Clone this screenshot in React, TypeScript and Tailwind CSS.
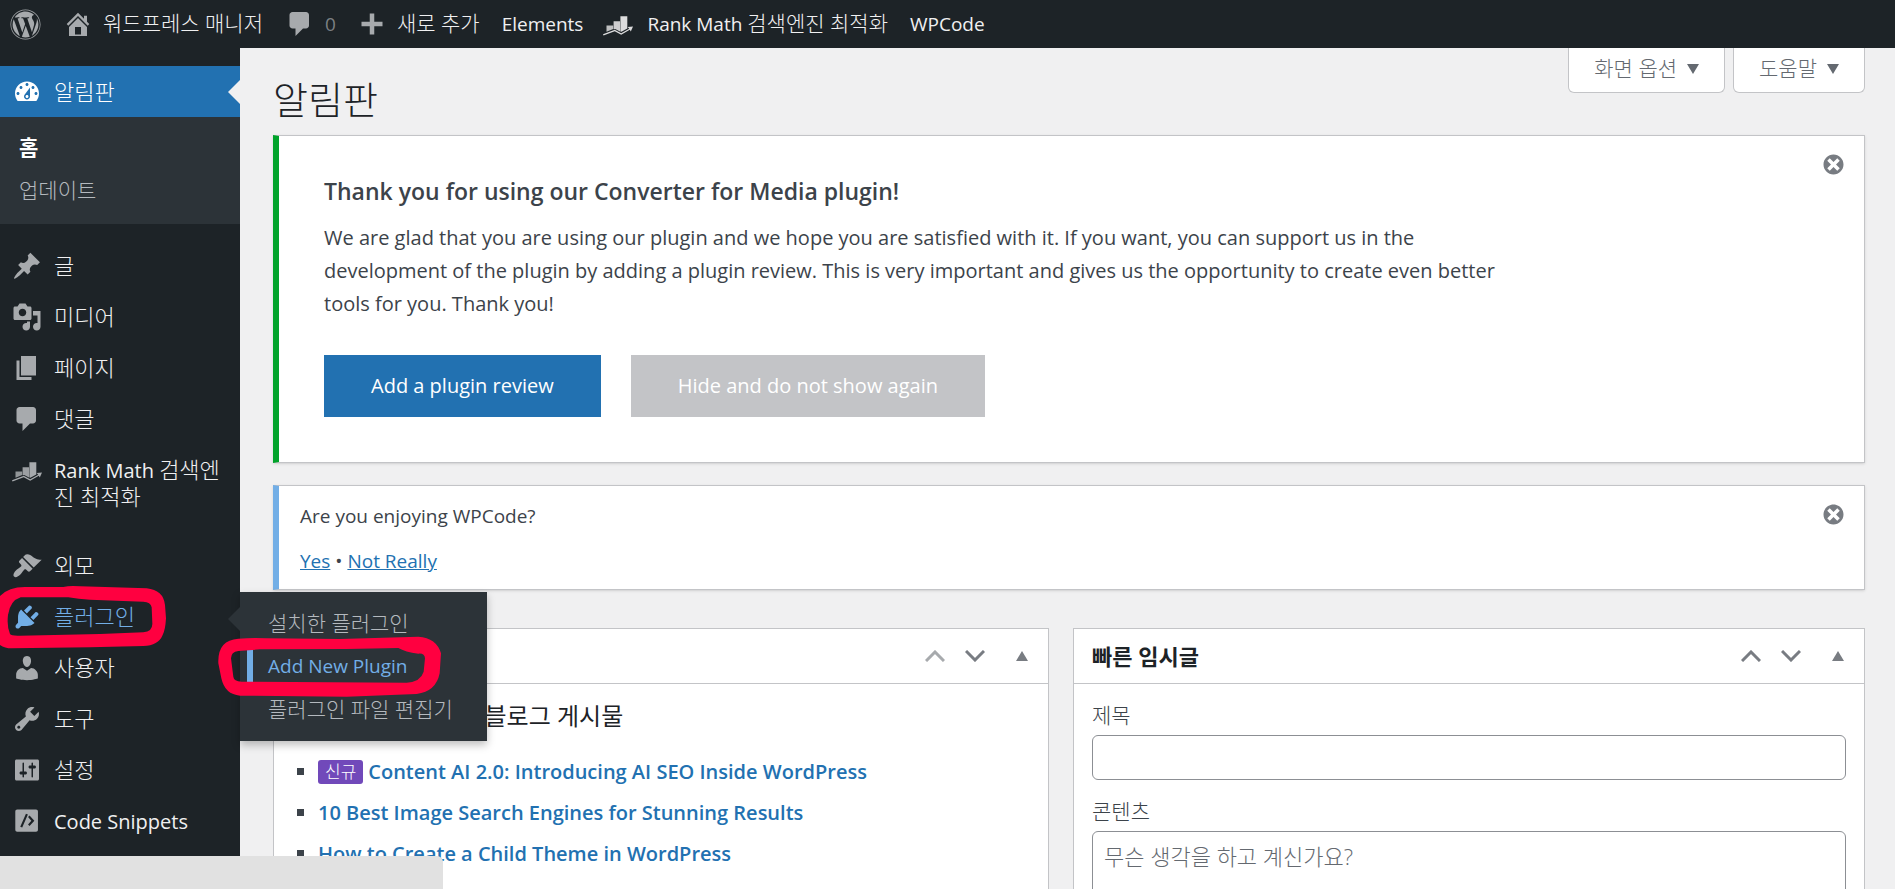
import type { ReactNode } from "react";
import { FaWordpress } from "react-icons/fa";

const icons = {
  dashboard:
    "M3.76 16h12.48c1.1-1.37 1.76-3.11 1.76-5 0-4.42-3.58-8-8-8s-8 3.58-8 8c0 1.89.66 3.63 1.76 5zM10 4c.55 0 1 .45 1 1s-.45 1-1 1-1-.45-1-1 .45-1 1-1zM6 6c.55 0 1 .45 1 1s-.45 1-1 1-1-.45-1-1 .45-1 1-1zm8 0c.55 0 1 .45 1 1s-.45 1-1 1-1-.45-1-1 .45-1 1-1zm-5.37 5.55L12 7v6c0 1.1-.9 2-2 2s-2-.9-2-2c0-.57.24-1.08.63-1.45zM4 10c.55 0 1 .45 1 1s-.45 1-1 1-1-.45-1-1 .45-1 1-1zm12 0c.55 0 1 .45 1 1s-.45 1-1 1-1-.45-1-1 .45-1 1-1zm-5 3c0-.55-.45-1-1-1s-1 .45-1 1 .45 1 1 1 1-.45 1-1z",
  post: "M10.44 3.02l1.82-1.82 6.36 6.35-1.83 1.82c-1.05-.68-2.48-.57-3.41.36l-.75.75c-.92.93-1.04 2.35-.35 3.41l-1.83 1.82-2.41-2.41-2.8 2.79c-.42.42-3.38 2.71-3.8 2.29s1.86-3.39 2.28-3.81l2.79-2.79L4.1 9.36l1.83-1.82c1.05.69 2.48.57 3.4-.36l.75-.75c.93-.92 1.05-2.35.36-3.41z",
  media:
    "M13 11V4c0-.55-.45-1-1-1h-1.67L9 1H5L3.67 3H2c-.55 0-1 .45-1 1v7c0 .55.45 1 1 1h10c.55 0 1-.45 1-1zM7 4.5c1.38 0 2.5 1.12 2.5 2.5S8.38 9.5 7 9.5 4.5 8.38 4.5 7 5.62 4.5 7 4.5zM14 6h5v10.5c0 1.38-1.12 2.5-2.5 2.5S14 17.88 14 16.5s1.12-2.5 2.5-2.5c.17 0 .34.02.5.05V9h-3V6zm-4 8.05V13h2v3.5c0 1.38-1.12 2.5-2.5 2.5S7 17.88 7 16.5 8.12 14 9.5 14c.17 0 .34.02.5.05z",
  page: "M6 15V2h10v13H6zm-1 1h8v2H3V5h2v11z",
  comments:
    "M5 2h9c1.1 0 2 .9 2 2v7c0 1.1-.9 2-2 2h-2l-5 5v-5H5c-1.1 0-2-.9-2-2V4c0-1.1.9-2 2-2z",
  appearance:
    "M14.48 11.06L7.41 3.99l1.5-1.5c.5-.56 2.3-.47 3.51.32 1.21.8 1.43 1.28 2.91 2.1 1.18.64 2.45 1.26 4.45.85zm-.71.71L6.7 4.7 4.93 6.47c-.39.39-.39 1.02 0 1.41l1.06 1.06c.39.39.39 1.03 0 1.42-.6.6-1.43 1.11-2.21 1.69-.35.26-.7.53-1.01.84C1.43 14.23.4 16.08 1.4 17.07c.99 1 2.84-.03 4.18-1.36.31-.31.58-.66.85-1.02.57-.78 1.08-1.61 1.69-2.21.39-.39 1.02-.39 1.41 0l1.06 1.06c.39.39 1.02.39 1.41 0z",
  plugins:
    "M13.11 4.36L9.87 7.6 8 5.73l3.24-3.24c.35-.34 1.05-.2 1.56.32.52.51.66 1.21.31 1.55zm-8 1.77l.91-1.12 9.01 9.01-1.19.84c-.71.71-2.63 1.16-3.82 1.16H6.14L4.9 17.26c-.59.59-1.54.59-2.12 0-.59-.58-.59-1.53 0-2.12l1.24-1.24v-3.88c0-1.13.4-3.19 1.09-3.89zm7.26 3.97l3.24-3.24c.34-.35 1.04-.21 1.55.31.52.51.66 1.21.31 1.55l-3.24 3.25z",
  users:
    "M10 9.25c-2.27 0-2.73-3.44-2.73-3.44C7 4.02 7.82 2 9.97 2c2.16 0 2.98 2.02 2.71 3.81 0 0-.41 3.44-2.68 3.44zm0 2.57L12.72 10c2.39 0 4.52 2.33 4.52 4.53v2.49s-3.65 1.13-7.24 1.13c-3.65 0-7.24-1.13-7.24-1.13v-2.49c0-2.25 1.94-4.48 4.47-4.48z",
  tools:
    "M16.68 9.77c-1.34 1.34-3.3 1.67-4.95.99l-5.41 6.52c-.99.99-2.59.99-3.58 0s-.99-2.59 0-3.57l6.52-5.42c-.68-1.65-.35-3.61.99-4.95 1.28-1.28 3.12-1.62 4.72-1.06l-2.89 2.89 2.82 2.82 2.86-2.87c.53 1.58.18 3.39-1.08 4.65zM3.81 16.21c.4.39 1.04.39 1.43 0 .4-.4.4-1.04 0-1.43-.39-.4-1.03-.4-1.43 0-.39.39-.39 1.03 0 1.43z",
  settings:
    "M18 16V4c0-.55-.45-1-1-1H3c-.55 0-1 .45-1 1v12c0 .55.45 1 1 1h14c.55 0 1-.45 1-1zM8 11h1c.55 0 1 .45 1 1s-.45 1-1 1H8v1.5c0 .28-.22.5-.5.5s-.5-.22-.5-.5V13H6c-.55 0-1-.45-1-1s.45-1 1-1h1V5.5c0-.28.22-.5.5-.5s.5.22.5.5V11zm5-2h-1c-.55 0-1-.45-1-1s.45-1 1-1h1V5.5c0-.28.22-.5.5-.5s.5.22.5.5V7h1c.55 0 1 .45 1 1s-.45 1-1 1h-1v5.5c0 .28-.22.5-.5.5s-.5-.22-.5-.5V9z",
  home: "M16 8.5l1.53 1.53-1.06 1.06L10 4.6l-6.47 6.49-1.06-1.06L10 2.5l4 4v-2h2v4zm-6-2.46l6 5.99V18H4v-5.97zM12 17v-5H8v5h4z",
  plus: "M17 8.5v3h-5.5V17h-3v-5.5H3v-3h5.5V3h3v5.5z",
  dismiss:
    "M10 2c4.42 0 8 3.58 8 8s-3.58 8-8 8-8-3.58-8-8 3.58-8 8-8zm5 11l-3-3 3-3-2-2-3 3-3-3-2 2 3 3-3 3 2 2 3-3 3 3z",
  code: "M3.500 2.300h12.500c.8 0 1.300.5 1.300 1.300v12.200c0 .8-.5 1.300-1.300 1.300H3.500c-.8 0-1.300-.5-1.300-1.300V3.600c0-.8.5-1.300 1.300-1.300zM9.300 5.200L5.500 13.900l1.300.5L10.600 5.700zM10.700 7.300l2.200 2.500-2.200 2.600 1 1L14.900 9.800 11.700 6.300z",
};

type IconName = keyof typeof icons | "rankMath";

function Icon({ name, className = "size-[30px]" }: { name: IconName; className?: string }) {
  if (name === "rankMath") {
    return (
      <svg viewBox="0 0 30 30" fill="currentColor" aria-hidden="true" className={`shrink-0 ${className}`}>
        <path opacity="0.85" d="M3.500 16.500h6.700v3.500l-6.700 2.800z" />
        <path opacity="0.92" d="M10.600 12.300h6.400v10.200l-4.800-2.600-1.600.4z" />
        <path d="M17.400 7.300h6.900v12.100l-5.900 3.300-1-.2z" />
        <path d="M0 25.200l11.800-4.500 6.400 3.600 8-4.500-1.600-1.800 5.400-.6-2.200 5-1-1.700-8.600 5-6.500-3.500L.5 26.500z" />
      </svg>
    );
  }
  return (
    <svg viewBox="0 0 20 20" fill="currentColor" fillRule="evenodd" aria-hidden="true" className={`shrink-0 ${className}`}>
      <path d={icons[name]} />
    </svg>
  );
}

const mainMenu: { icon: IconName; latin?: string; label?: string }[][] = [
  [
    { icon: "post", label: "글" },
    { icon: "media", label: "미디어" },
    { icon: "page", label: "페이지" },
    { icon: "comments", label: "댓글" },
    { icon: "rankMath", latin: "Rank Math ", label: "검색엔진 최적화" },
  ],
  [
    { icon: "appearance", label: "외모" },
    { icon: "plugins", label: "플러그인" },
    { icon: "users", label: "사용자" },
    { icon: "tools", label: "도구" },
    { icon: "settings", label: "설정" },
    { icon: "code", latin: "Code Snippets" },
  ],
];

function AdminBar() {
  return (
    <header className="flex h-12 items-center bg-[#1d2327] text-[19px] text-[#f0f0f1]">
      <a href="#wp" aria-label="WordPress" className="ml-[10px] text-[#a7aaad]">
        <FaWordpress className="size-[31px]" />
      </a>
      <a href="#site" className="ml-[22px] flex items-center gap-[10px] text-[21px] font-light">
        <Icon name="home" className="size-[30px] text-[#a7aaad]" />
        워드프레스 매니저
      </a>
      <a href="#comments" className="ml-[22px] flex items-center gap-[10px] text-[#a7aaad]/70">
        <Icon name="comments" className="size-[30px] text-[#a7aaad]" />0
      </a>
      <a href="#new" className="ml-[21px] flex items-center gap-[10px] text-[21px] font-light">
        <Icon name="plus" className="size-[30px] text-[#a7aaad]" />
        새로 추가
      </a>
      <a href="#elements" className="ml-[22px]">Elements</a>
      <a href="#rank" className="ml-5 flex items-center gap-[14px]">
        <Icon name="rankMath" className="size-[30px] text-[#dcdcdd]" />
        <span>
          Rank Math <span className="text-[21px] font-light">검색엔진 최적화</span>
        </span>
      </a>
      <a href="#wpcode" className="ml-[22px]">WPCode</a>
    </header>
  );
}

function PluginsFlyout() {
  return (
    <ul className="absolute left-full top-0 z-20 w-[247px] bg-[#2c3338] py-[10px] text-[21px] font-light leading-[27px] text-[#b4b9be] shadow-[0_4px_8px_rgba(0,0,0,0.25)]">
      <li className="absolute right-full top-[15px] h-0 w-0 border-y-[12px] border-r-[12px] border-y-transparent border-r-[#2c3338]" />
      <li className="flex h-[43px] items-center pl-7">
        <a href="#installed">설치한 플러그인</a>
      </li>
      <li className="flex h-[43px] items-center pl-[7px] text-[19px] font-normal">
        <a href="#add" className="border-l-[6px] border-[#72aee6] py-[3px] pl-[15px] text-[#72aee6]">Add New Plugin</a>
      </li>
      <li className="flex h-[43px] items-center pl-7">
        <a href="#editor">플러그인 파일 편집기</a>
      </li>
    </ul>
  );
}

function Sidebar() {
  return (
    <nav className="relative z-10 w-60 shrink-0 self-start bg-[#1d2327] pb-[10px] pt-[18px] text-xl leading-[27px] text-[#f0f0f1]">
      <a href="#dashboard" className="relative flex h-[51px] items-center bg-[#2271b1] text-[22px] font-light text-white">
        <span className="flex w-[54px] justify-center">
          <Icon name="dashboard" />
        </span>
        알림판
        <span className="absolute right-0 h-0 w-0 border-y-[12px] border-r-[12px] border-y-transparent border-r-[#f0f0f1]" />
      </a>
      <ul className="mb-[17px] bg-[#2c3338] pb-[12px] pt-[9px] pl-[19px] text-[21px] text-[#b4b9be]">
        <li className="flex h-[43px] items-center font-bold text-white">
          <a href="#home">홈</a>
        </li>
        <li className="flex h-[43px] items-center font-light">
          <a href="#updates">업데이트</a>
        </li>
      </ul>
      {mainMenu.map((group, index) => (
        <ul key={index} className="mb-[18px] last:mb-0">
          {group.map(({ icon, latin, label }) => {
            const open = icon === "plugins";
            return (
              <li key={icon} className="relative">
                <a href={`#${icon}`} className={`flex items-start ${open ? "text-[#72aee6]" : ""}`}>
                  <span className={`flex w-[54px] shrink-0 justify-center pt-[10px] ${open ? "" : "text-[#a7aaad]"}`}>
                    <Icon name={icon} />
                  </span>
                  <span className="break-all py-3 pr-2">
                    {latin}
                    {label && <span className="text-[22px] font-light leading-none">{label}</span>}
                  </span>
                </a>
                {open && <PluginsFlyout />}
              </li>
            );
          })}
        </ul>
      ))}
    </nav>
  );
}

function MetaTab({ children }: { children: ReactNode }) {
  return (
    <button className="flex h-[45px] items-center gap-[10px] rounded-b-md border border-t-0 border-[#c3c4c7] bg-white px-[25px] pb-[2px] text-[21px] font-light text-[#646970]">
      {children}
      <svg viewBox="0 0 12 10" className="h-[10px] w-3" fill="currentColor" aria-hidden="true">
        <path d="M0 0h12L6 10z" />
      </svg>
    </button>
  );
}

function DismissButton() {
  return (
    <button aria-label="닫기" className="absolute right-[18px] top-4 text-[#787c82]">
      <Icon name="dismiss" className="size-[25px]" />
    </button>
  );
}

function PostboxHeader({ title, first }: { title: string; first?: boolean }) {
  return (
    <div className="flex h-[55px] items-center border-b border-[#c3c4c7] pl-[18px] pr-5 text-[#787c82]">
      <h2 className="flex-1 text-[22px] font-bold text-[#1d2327]">{title}</h2>
      <button aria-label="위로 이동" className={first ? "text-[#a7aaad]" : ""}>
        <svg viewBox="0 0 20 12" className="h-3 w-5" fill="none" stroke="currentColor" strokeWidth="3" aria-hidden="true">
          <path d="M1 11L10 2l9 9" />
        </svg>
      </button>
      <button aria-label="아래로 이동" className="ml-5">
        <svg viewBox="0 0 20 12" className="h-3 w-5" fill="none" stroke="currentColor" strokeWidth="3" aria-hidden="true">
          <path d="M1 1l9 9 9-9" />
        </svg>
      </button>
      <button aria-label="패널 전환" className="ml-[31px]">
        <svg viewBox="0 0 12 10" className="h-[10px] w-3" fill="currentColor" aria-hidden="true">
          <path d="M6 0l6 10H0z" />
        </svg>
      </button>
    </div>
  );
}

const posts = [
  { title: "Content AI 2.0: Introducing AI SEO Inside WordPress", isNew: true },
  { title: "10 Best Image Search Engines for Stunning Results" },
  { title: "How to Create a Child Theme in WordPress" },
];

function HighlightMarks() {
  return (
    <svg
      viewBox="0 0 1500 360"
      className="pointer-events-none absolute left-0 top-[530px] z-40 h-[120px] w-[500px] overflow-visible"
      fill="#ff0040"
      fillRule="evenodd"
      aria-hidden="true"
    >
      <path d="M-6 205Q20 171 75 171L190 171Q210 166 240 169L440 175Q490 180 495 225L498 265Q496 300 488 315Q475 347 430 348L270 352L35 355Q10 355-6 340zM62 202Q30 212 24 255Q20 290 30 312Q34 318 60 317L300 312L430 307Q458 304 457 280L455 232Q452 216 430 215L270 209Q235 207 205 202z" />
      <path d="M655 400Q652 330 715 326Q760 322 800 325L1020 327L1255 320Q1310 324 1323 370L1319 430Q1308 485 1250 492L1040 500L720 497Q675 494 664 445zM693 385L700 440Q701 454 725 455L1220 458Q1262 455 1271 425L1275 385Q1274 369 1255 371Q1215 366 1195 354L1040 357L780 358L715 363Q693 366 693 385z" />
    </svg>
  );
}

export default function App() {
  return (
    <div className="relative h-screen overflow-hidden bg-[#f0f0f1] font-['Open_Sans','Noto_Sans_CJK_KR',sans-serif] text-[#3c434a]">
      <AdminBar />
      <div className="flex">
        <Sidebar />
        <main className="min-w-0 flex-1 pl-[33px] pr-[30px]">
          <div className="flex h-[87px] items-start justify-between">
            <h1 className="pt-7 text-[38px] font-light leading-[46px] text-[#1d2327]">알림판</h1>
            <div className="flex gap-2">
              <MetaTab>화면 옵션</MetaTab>
              <MetaTab>도움말</MetaTab>
            </div>
          </div>

          <section className="relative border border-l-[6px] border-[#c3c4c7] border-l-[#00a32a] bg-white pb-[45px] pl-[45px] pt-[39px] shadow-sm">
            <DismissButton />
            <h2 className="text-[23px] font-semibold leading-[32px]">Thank you for using our Converter for Media plugin!</h2>
            <p className="mt-[14px] max-w-[1200px] text-xl leading-[33px]">
              We are glad that you are using our plugin and we hope you are satisfied with it. If you want, you can support us in the
              development of the plugin by adding a plugin review. This is very important and gives us the opportunity to create even
              better tools for you. Thank you!
            </p>
            <div className="mt-[35px] flex gap-[30px] text-xl text-white">
              <button className="h-[62px] bg-[#2271b1] px-[47px]">Add a plugin review</button>
              <button className="h-[62px] bg-[#c3c4c7] px-[47px]">Hide and do not show again</button>
            </div>
          </section>

          <section className="relative mt-[22px] border border-l-[6px] border-[#c3c4c7] border-l-[#72aee6] bg-white pb-[13px] pl-[21px] pt-[15px] text-[19px] leading-[30px] shadow-sm">
            <DismissButton />
            <p>Are you enjoying WPCode?</p>
            <p className="mt-[15px]">
              <a href="#yes" className="text-[#2271b1] underline">Yes</a> •{" "}
              <a href="#no" className="text-[#2271b1] underline">Not Really</a>
            </p>
          </section>

          <div className="mt-[38px] flex items-stretch gap-6">
            <section className="h-[300px] w-[776px] shrink-0 border border-[#c3c4c7] bg-white">
              <PostboxHeader title="Rank Math 개요" first />
              <div className="px-[18px] pt-[15px]">
                <h3 className="pl-4 text-2xl leading-[34px] text-[#1d2327]">Rank Math 최신 블로그 게시물</h3>
                <ul className="mt-[18px] text-xl font-semibold leading-[41px] text-[#2271b1]">
                  {posts.map(({ title, isNew }) => (
                    <li key={title} className="flex items-center pl-[5px]">
                      <span className="mr-[14px] size-[7px] bg-[#3c434a]" />
                      {isNew && (
                        <span className="mr-[5px] rounded-[3px] bg-[#7149ba] px-[7px] text-[17px] font-light leading-6 text-white">신규</span>
                      )}
                      <a href="#post">{title}</a>
                    </li>
                  ))}
                </ul>
              </div>
            </section>

            <section className="h-[300px] min-w-0 flex-1 border border-[#c3c4c7] bg-white">
              <PostboxHeader title="빠른 임시글" />
              <form className="px-[18px] pt-[18px] text-[21px] font-light">
                <label htmlFor="draft-title" className="block leading-[27px]">제목</label>
                <input id="draft-title" className="mt-[6px] block h-[45px] w-full rounded-md border border-[#8c8f94] bg-white px-3" />
                <label htmlFor="draft-content" className="mt-[18px] block leading-[27px]">콘텐츠</label>
                <textarea
                  id="draft-content"
                  placeholder="무슨 생각을 하고 계신가요?"
                  className="mt-[6px] block h-[135px] w-full resize-none rounded-md border border-[#8c8f94] px-[11px] py-[9px] text-[22px] leading-[30px] placeholder:text-[#646970]"
                />
              </form>
            </section>
          </div>
        </main>
      </div>
      <div className="absolute bottom-0 left-0 z-30 h-[33px] w-[443px] rounded-tr-md bg-[#e1e1e1]" />
      <HighlightMarks />
    </div>
  );
}
